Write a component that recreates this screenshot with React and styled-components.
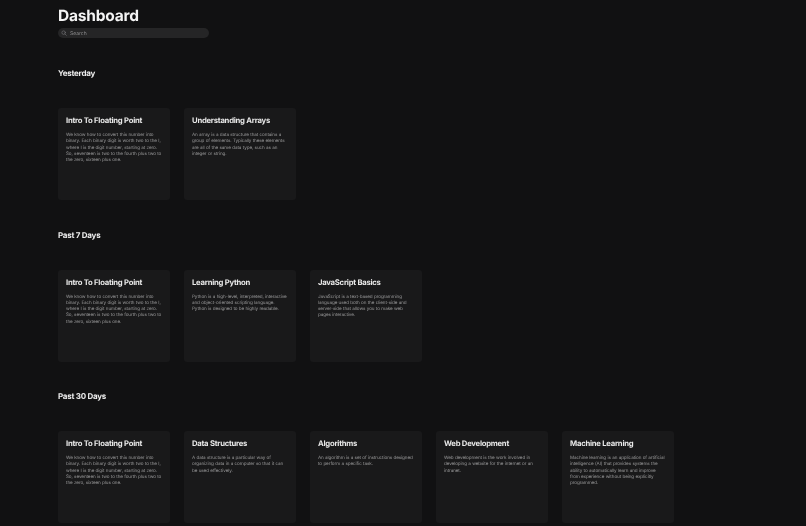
import React from "react";
import styled, { createGlobalStyle } from "styled-components";

const intro = {
  title: "Intro To Floating Point",
  lines: ["We know how to convert this number into", "binary. Each binary digit is worth two to the I,", "where I is the digit number, starting at zero.", "So, seventeen is two to the fourth plus two to", "the zero, sixteen plus one."],
};

const sections = [
  {
    title: "Yesterday",
    cards: [
      intro,
      { title: "Understanding Arrays", lines: ["An array is a data structure that contains a", "group of elements. Typically these elements", "are all of the same data type, such as an", "integer or string."] },
    ],
  },
  {
    title: "Past 7 Days",
    cards: [
      intro,
      { title: "Learning Python", lines: ["Python is a high-level, interpreted, interactive", "and object-oriented scripting language.", "Python is designed to be highly readable."] },
      { title: "JavaScript Basics", lines: ["JavaScript is a text-based programming", "language used both on the client-side and", "server-side that allows you to make web", "pages interactive."] },
    ],
  },
  {
    title: "Past 30 Days",
    cards: [
      intro,
      { title: "Data Structures", lines: ["A data structure is a particular way of", "organizing data in a computer so that it can", "be used effectively."] },
      { title: "Algorithms", lines: ["An algorithm is a set of instructions designed", "to perform a specific task."] },
      { title: "Web Development", lines: ["Web development is the work involved in", "developing a website for the internet or an", "intranet."] },
      { title: "Machine Learning", lines: ["Machine learning is an application of artificial", "intelligence (AI) that provides systems the", "ability to automatically learn and improve", "from experience without being explicitly", "programmed."] },
    ],
  },
];

const GlobalStyle = createGlobalStyle`
  html, body {
    margin: 0;
    height: 100%;
    background: #111112;
    overflow: hidden;
    font-family: Inter, "Liberation Sans", sans-serif;
    text-rendering: geometricPrecision;
  }
`;

const Page = styled.div`
  height: 526px;
  overflow: hidden;
  padding: 5.5px 0 0 58px;
  box-sizing: border-box;
  will-change: transform;
`;

const Heading = styled.h1`
  margin: 0;
  font-size: 15.5px;
  line-height: 19px;
  font-weight: 700;
  letter-spacing: -0.2px;
  color: #f4f4f4;
`;

const SearchBar = styled.div`
  display: flex;
  align-items: center;
  gap: 3px;
  width: 151px;
  height: 10px;
  margin-top: 3.5px;
  padding-left: 3px;
  box-sizing: border-box;
  border-radius: 5px;
  background: #252526;
  font-size: 5px;
  color: #8d8d8e;
`;

const SearchLabel = styled.span`
  padding-top: 1px;
`;

const Section = styled.section`
  padding-top: 30px;
  height: 161.5px;
  box-sizing: border-box;
`;

const SectionTitle = styled.h2`
  margin: 0;
  font-size: 8px;
  line-height: 10px;
  font-weight: 700;
  letter-spacing: -0.25px;
  color: #eeeeee;
`;

const CardRow = styled.div`
  display: flex;
  gap: 14px;
  margin-top: 30px;
`;

const Card = styled.article`
  width: 112px;
  height: 92px;
  box-sizing: border-box;
  padding: 7px 8px;
  border-radius: 3px;
  background: #19191a;
`;

const CardTitle = styled.h3`
  margin: 1px 0 7px;
  font-size: 7.7px;
  line-height: 10px;
  font-weight: 700;
  letter-spacing: -0.25px;
  color: #e8e8e8;
  white-space: nowrap;
`;

const CardLine = styled.div`
  font-size: 4.6px;
  line-height: 6.3px;
  letter-spacing: -0.1px;
  word-spacing: 0.2px;
  color: #979798;
  white-space: nowrap;
`;

export default function App() {
  return (
    <>
      <GlobalStyle />
      <Page>
        <Heading>Dashboard</Heading>
        <SearchBar>
          <svg width="6" height="6" viewBox="0 0 24 24" fill="none" stroke="#77777a" strokeWidth="2.4" strokeLinecap="round">
            <circle cx="10.5" cy="10.5" r="7" />
            <path d="M16 16l5.5 5.5" />
          </svg>
          <SearchLabel>Search</SearchLabel>
        </SearchBar>
        {sections.map((section) => (
          <Section key={section.title}>
            <SectionTitle>{section.title}</SectionTitle>
            <CardRow>
              {section.cards.map((card) => (
                <Card key={card.title}>
                  <CardTitle>{card.title}</CardTitle>
                  {card.lines.map((line) => (
                    <CardLine key={line}>{line}</CardLine>
                  ))}
                </Card>
              ))}
            </CardRow>
          </Section>
        ))}
      </Page>
    </>
  );
}
